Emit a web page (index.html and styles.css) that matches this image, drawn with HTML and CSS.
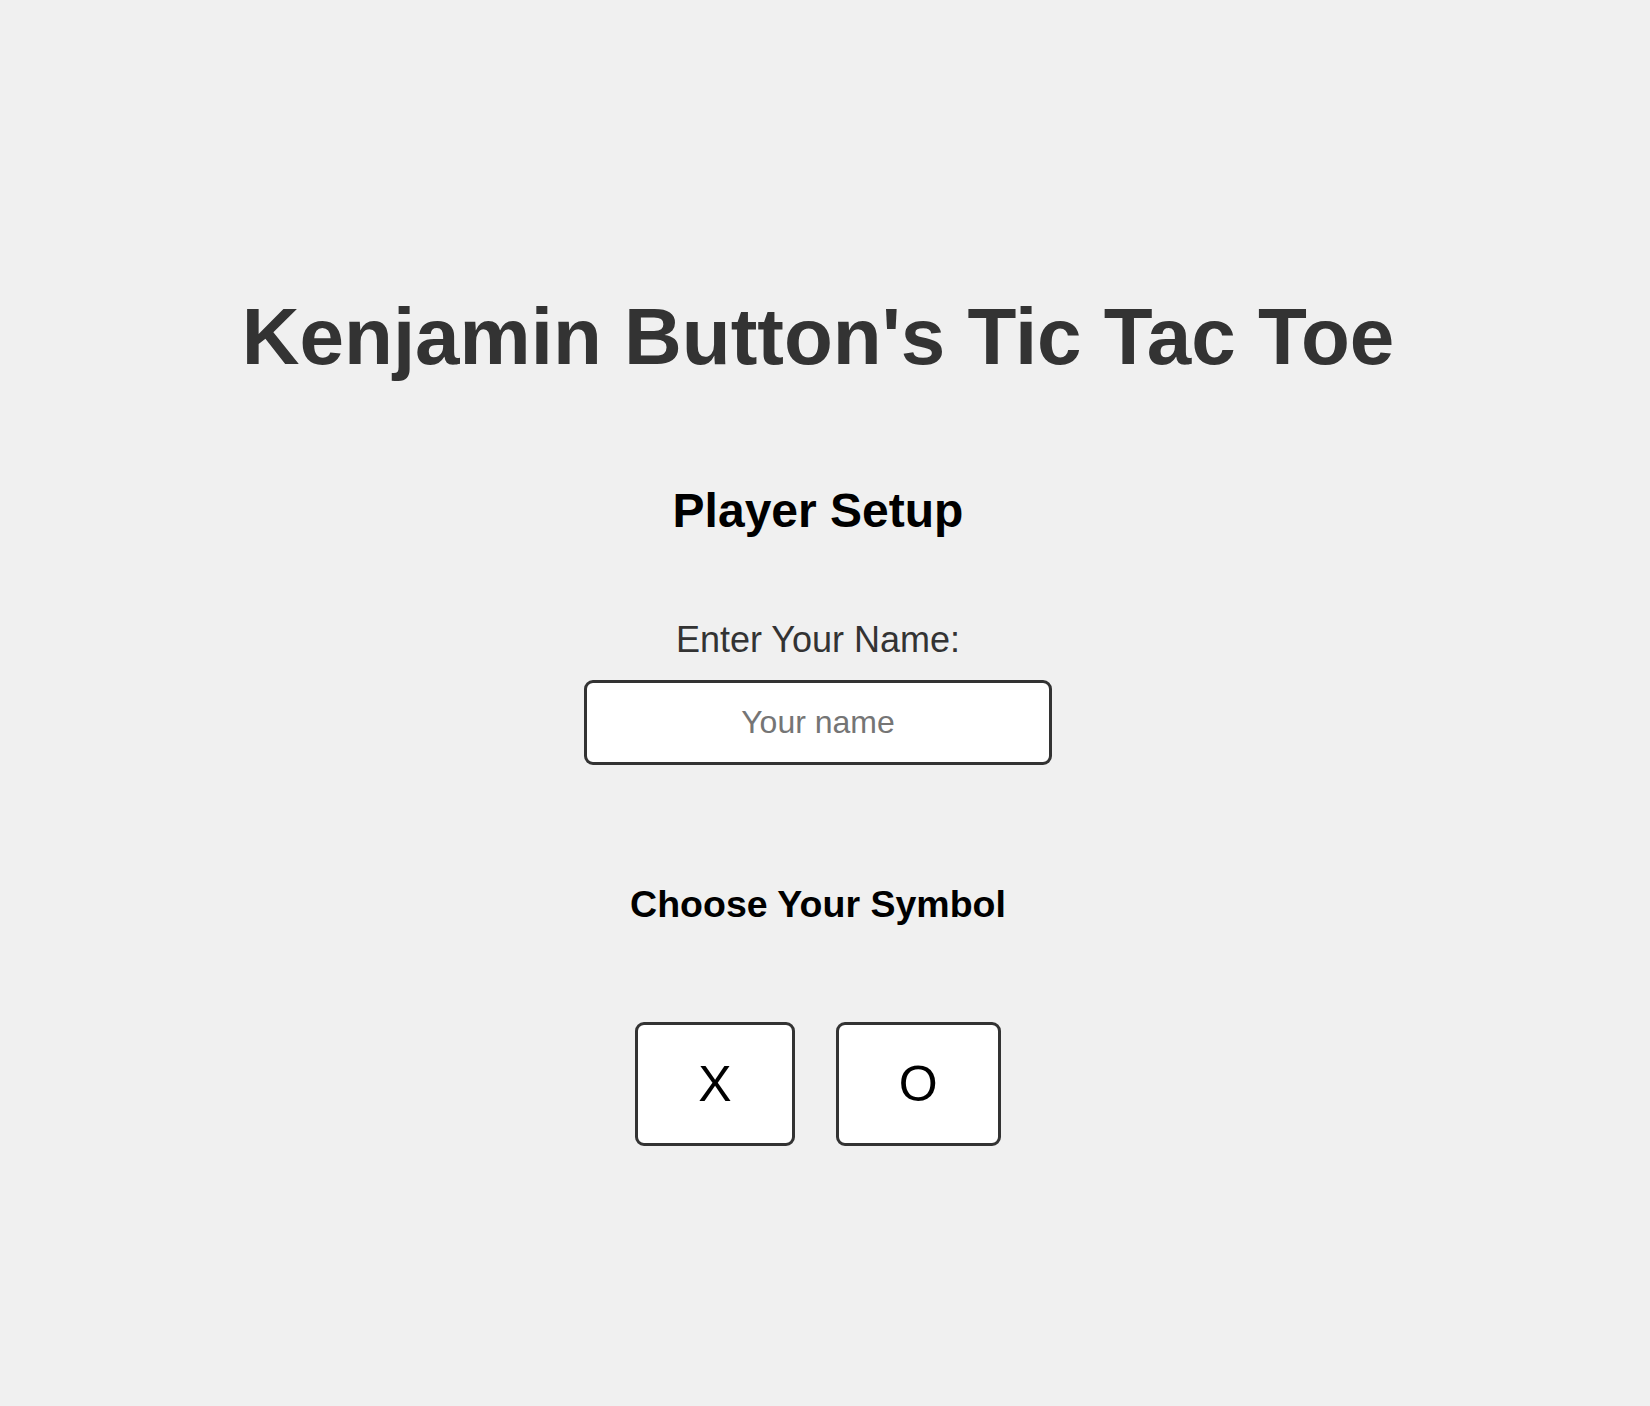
FILE: index.html
```html
<!DOCTYPE html>
<html lang="en">
<head>
<meta charset="utf-8">
<title>Kenjamin Button's Tic Tac Toe</title>
<link rel="stylesheet" href="styles.css">
</head>
<body>
<main class="app">
  <h1 class="title">Kenjamin Button's Tic Tac Toe</h1>
  <section class="setup">
    <h2 class="setup-heading">Player Setup</h2>
    <label class="name-label" for="player-name">Enter Your Name:</label>
    <input class="name-input" id="player-name" type="text" placeholder="Your name">
    <h3 class="symbol-heading">Choose Your Symbol</h3>
    <div class="symbols">
      <button class="symbol-btn" type="button">X</button>
      <button class="symbol-btn" type="button">O</button>
    </div>
  </section>
</main>
</body>
</html>
```

FILE: styles.css
```css
html, body {
  margin: 0;
  padding: 0;
}

body {
  background: #f0f0f0;
  font-family: "Liberation Sans", Arial, Helvetica, sans-serif;
  color: #333;
  min-height: 1406px;
}

.app {
  display: flex;
  flex-direction: column;
  align-items: center;
  padding-top: 291px;
  padding-right: 14px;
}

.title {
  margin: 0;
  font-size: 80px;
  font-weight: bold;
  color: #333;
  line-height: normal;
}

.setup {
  display: flex;
  flex-direction: column;
  align-items: center;
  margin-top: 100px;
}

.setup-heading {
  margin: 0;
  font-size: 48px;
  font-weight: bold;
  color: #000;
}

.name-label {
  margin-top: 81px;
  font-size: 36px;
  color: #333;
}

.name-input {
  box-sizing: border-box;
  margin-top: 19px;
  width: 468px;
  height: 85px;
  border: 3px solid #333;
  border-radius: 9px;
  background: #fff;
  font-family: "Liberation Sans", Arial, sans-serif;
  font-size: 32px;
  text-align: center;
  color: #333;
  outline: none;
}

.name-input::placeholder {
  color: #757575;
}

.symbol-heading {
  margin: 118px 0 0;
  font-size: 37.5px;
  font-weight: bold;
  color: #000;
}

.symbols {
  display: flex;
  gap: 41px;
  margin-top: 96px;
}

.symbol-btn {
  font-family: "Liberation Sans", Arial, sans-serif;
  font-size: 50px;
  line-height: normal;
  padding: 30px 60px;
  border: 3px solid #333;
  border-radius: 9px;
  background: #fff;
  color: #000;
  cursor: pointer;
}
```
